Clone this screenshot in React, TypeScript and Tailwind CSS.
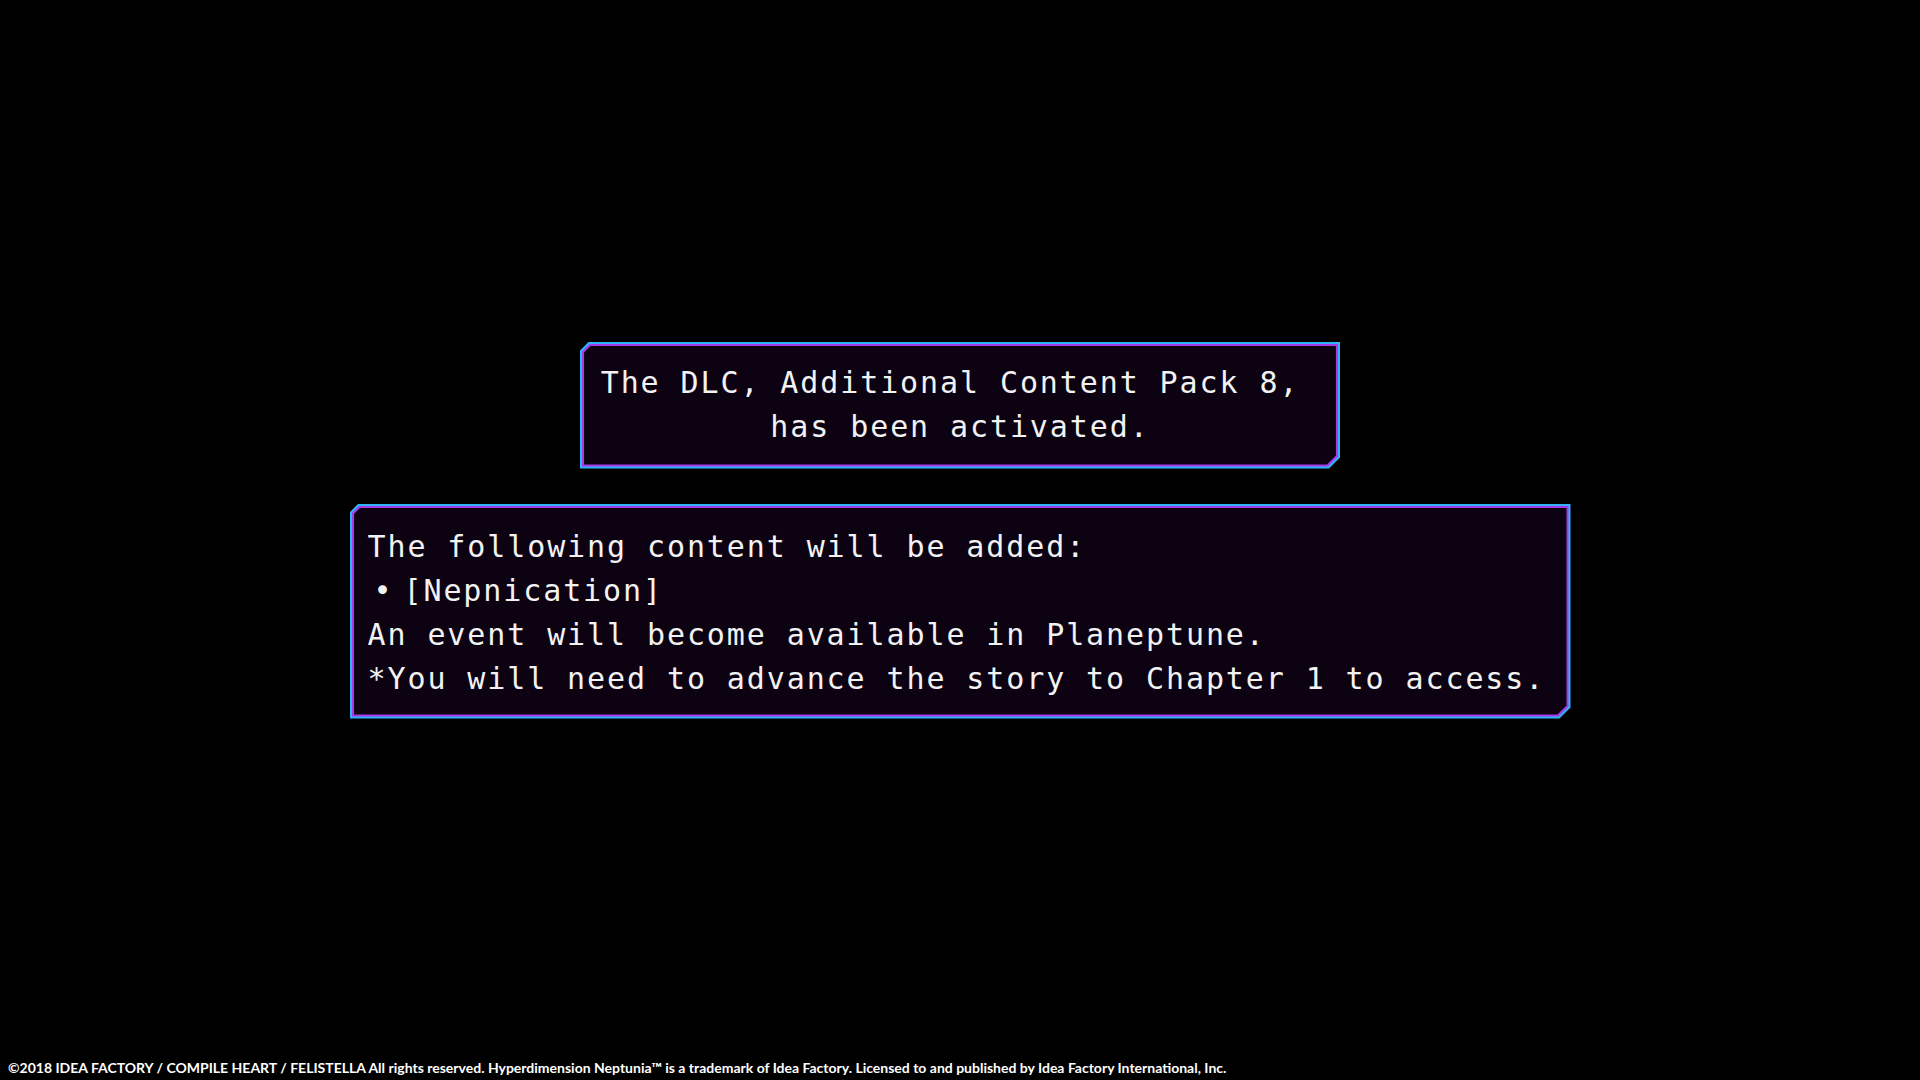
const Panel = ({ className, children }: { className: string; children: React.ReactNode }) => {
  return (
    <div className={"bg-[#2fb2f8] p-[2px] [clip-path:polygon(9px_0,100%_0,100%_calc(100%-11px),calc(100%-11px)_100%,0_100%,0_9px)] " + className}>
      <div className="bg-[#a63ae8] p-[2px] [clip-path:polygon(8px_0,100%_0,100%_calc(100%-10px),calc(100%-10px)_100%,0_100%,0_8px)]">
        <div className="bg-[#0c0212] [clip-path:polygon(7px_0,100%_0,100%_calc(100%-9px),calc(100%-9px)_100%,0_100%,0_7px)]">
          {children}
        </div>
      </div>
    </div>
  );
};

const App = () => {
  return (
    <div className="w-full h-screen bg-black flex flex-col overflow-hidden">
      <div className="flex-1 flex flex-col items-center justify-center gap-[35px] text-[#f2f2f2] font-['DejaVu_Sans_Mono',monospace] text-[30px] leading-[44px] tracking-[1.9px]">
        <Panel className="w-[760px]">
          <div className="h-[119px] flex flex-col items-center justify-center text-center whitespace-pre">
            <p>The DLC, Additional Content Pack 8, </p>
            <p>has been activated.</p>
          </div>
        </Panel>
        <Panel className="w-[1221px]">
          <div className="pl-[14px] pt-[17px] pb-[14px]">
            <p>The following content will be added:</p>
            <p>
              <span className="pl-[6px] pr-[10px]">•</span>[Nepnication]
            </p>
            <p>An event will become available in Planeptune.</p>
            <p>*You will need to advance the story to Chapter 1 to access.</p>
          </div>
        </Panel>
      </div>
      <div className="pl-[8px] pb-[4px] text-white text-[14px] leading-[16px] font-bold font-['Lato','Liberation_Sans',sans-serif] whitespace-nowrap">
        ©2018 IDEA FACTORY / COMPILE HEART / FELISTELLA All rights reserved. Hyperdimension Neptunia™ is a trademark of Idea Factory. Licensed to and published by Idea Factory International, Inc.
      </div>
    </div>
  );
};

export default App;
